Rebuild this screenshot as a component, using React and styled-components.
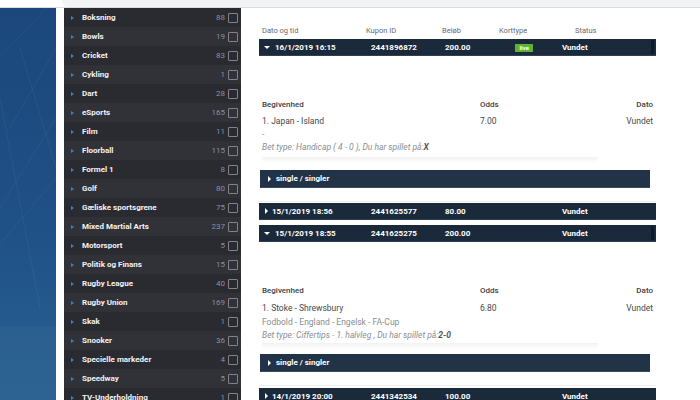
import styled, { createGlobalStyle } from 'styled-components';

const GlobalStyle = createGlobalStyle`
  html, body {
    margin: 0;
    padding: 0;
    background: #ffffff;
    font-family: Roboto, "Liberation Sans", Arial, sans-serif;
  }
  * { box-sizing: border-box; }
`;

const Page = styled.div`
  width: 700px;
  height: 400px;
  overflow: hidden;
  display: flex;
  flex-direction: column;
`;

const TopBar = styled.div`
  height: 8px;
  flex-shrink: 0;
  display: flex;
  background: #ffffff;
  border-bottom: 1px solid #dcdcdc;
`;

const AddressPill = styled.div`
  margin-left: 62px;
  flex: 1;
  background: #f1f3f4;
  border-bottom-left-radius: 6px;
`;

const Body = styled.div`
  flex: 1;
  display: flex;
  min-height: 0;
`;

const BluePanel = styled.div`
  width: 56px;
  flex-shrink: 0;
  background: linear-gradient(180deg, #1b477c 0%, #1f5086 55%, #245a8d 80%, #275e90 100%);
  overflow: hidden;
  svg { display: block; }
`;

const Sidebar = styled.div`
  width: 177px;
  margin-left: 8px;
  flex-shrink: 0;
  background: #2b2b33;
  overflow: hidden;
`;

const SportRow = styled.div`
  height: 19px;
  display: flex;
  align-items: center;
  padding: 0 3px 0 7px;
  background: ${p => (p.$odd ? '#2a2a31' : '#313138')};
`;

const Caret = styled.span`
  width: 0;
  height: 0;
  border-top: 2.5px solid transparent;
  border-bottom: 2.5px solid transparent;
  border-left: 3px solid #2b8ad6;
  margin-right: 8px;
`;

const SportName = styled.span`
  flex: 1;
  color: #f2f2f4;
  font-size: 8px;
  font-weight: 700;
`;

const SportCount = styled.span`
  color: #8790a3;
  font-size: 8px;
  margin-right: 3px;
`;

const CheckBox = styled.span`
  width: 10px;
  height: 10px;
  border: 1px solid #80838d;
  border-radius: 1px;
`;

const Main = styled.div`
  flex: 1;
  padding: 13px 0 0 18px;
  overflow: hidden;
`;

const Table = styled.div`
  width: 397px;
`;

const HeaderRow = styled.div`
  display: grid;
  grid-template-columns: 104px 76px 57px 76px 1fr;
  padding: 0 0 0 3px;
  height: 18px;
  align-items: center;
  color: #666a70;
  font-size: 7.5px;
`;

const Coupon = styled.div`
  display: grid;
  grid-template-columns: 107px 74px 69px 48px 1fr;
  align-items: center;
  height: 17px;
  margin-top: ${p => p.$gap || 0}px;
  padding-left: 5px;
  background: #1b2a3b;
  color: #ffffff;
  font-size: 8px;
  font-weight: 700;
  position: relative;
  border-bottom: 1px solid #2e4056;
  &::after {
    content: '';
    display: ${p => (p.$open ? 'block' : 'none')};
    position: absolute;
    right: 2px;
    top: 1px;
    bottom: 1px;
    width: 3px;
    background: #0f1a26;
  }
`;

const DateCell = styled.span`
  display: flex;
  align-items: center;
  gap: 5px;
`;

const Arrow = styled.span`
  width: 0;
  height: 0;
  ${p =>
    p.$open
      ? `border-left: 3px solid transparent;
         border-right: 3px solid transparent;
         border-top: 3.5px solid #ffffff;`
      : `border-top: 3px solid transparent;
         border-bottom: 3px solid transparent;
         border-left: 3.5px solid #ffffff;
         margin-left: 1px;
         margin-right: -1px;`}
`;

const LiveBadge = styled.span`
  justify-self: start;
  margin-left: 1px;
  margin-top: 2px;
  background: #5cb531;
  color: #ffffff;
  font-size: 6px;
  font-weight: 700;
  line-height: 8px;
  padding: 0 4.5px;
`;

const Details = styled.div`
  padding: ${p => p.$top}px 3px 0 3px;
  color: #444850;
  font-size: 8.5px;
`;

const DetailGrid = styled.div`
  display: grid;
  grid-template-columns: 218px 1fr auto;
  align-items: center;
`;

const DetailHead = styled.span`
  font-size: 8px;
  font-weight: 500;
  color: #3c4047;
  height: ${p => p.$h}px;
  display: flex;
  align-items: center;
  justify-self: ${p => (p.$right ? 'end' : 'start')};
`;

const DetailCell = styled.span`
  height: 17px;
  display: flex;
  align-items: center;
  justify-self: ${p => (p.$right ? 'end' : 'start')};
`;

const SubLine = styled.div`
  color: #8a8d92;
  height: ${p => p.$h}px;
  display: flex;
  align-items: center;
  font-style: ${p => (p.$italic ? 'italic' : 'normal')};
  b { font-weight: 700; color: #55585d; }
`;

const Fade = styled.div`
  height: 6px;
  width: 336px;
  margin-top: 2px;
  background: linear-gradient(180deg, rgba(0, 0, 0, 0.045), rgba(0, 0, 0, 0));
  border-top: 1px solid #f3f3f3;
`;

const SingleBar = styled.div`
  margin: ${p => p.$gap}px 0 0 1px;
  width: 390px;
  height: 18px;
  background: #213346;
  color: #ffffff;
  font-size: 8px;
  font-weight: 700;
  display: flex;
  align-items: center;
  gap: 6px;
  padding-left: 7px;
  border-bottom: 1px solid #3a4a5c;
`;

const Divider = styled.div`
  height: 1px;
  background: #eeeff1;
  margin-top: 13px;
`;

const sports = [
  ['Boksning', 88], ['Bowls', 19], ['Cricket', 83], ['Cykling', 1], ['Dart', 28],
  ['eSports', 165], ['Film', 11], ['Floorball', 115], ['Formel 1', 8], ['Golf', 80],
  ['Gæliske sportsgrene', 75], ['Mixed Martial Arts', 237], ['Motorsport', 5],
  ['Politik og Finans', 15], ['Rugby League', 40], ['Rugby Union', 169], ['Skak', 1],
  ['Snooker', 36], ['Specielle markeder', 4], ['Speedway', 5], ['TV-Underholdning', 1],
];

const BlueLines = () => (
  <svg width="56" height="392" viewBox="0 0 56 392">
    <g stroke="#ffffff" strokeOpacity="0.05" strokeWidth="1" fill="none">
      <line x1="-10" y1="60" x2="56" y2="-10" />
      <line x1="10" y1="120" x2="56" y2="40" />
      <line x1="0" y1="200" x2="56" y2="110" />
      <line x1="-20" y1="260" x2="56" y2="170" />
      <line x1="20" y1="40" x2="56" y2="160" />
      <line x1="0" y1="90" x2="40" y2="300" />
    </g>
    <rect x="0" y="318" width="56" height="74" fill="#ffffff" fillOpacity="0.03" />
  </svg>
);

const CouponRow = ({ date, id, amount, live, open, gap }) => (
  <Coupon $open={open} $gap={gap}>
    <DateCell>
      <Arrow $open={open} />
      {date}
    </DateCell>
    <span>{id}</span>
    <span>{amount}</span>
    {live ? <LiveBadge>live</LiveBadge> : <span />}
    <span>Vundet</span>
  </Coupon>
);

const EventDetails = ({ top, headH, event, odds, sub, subH, bet, betH, pick, barGap }) => (
  <>
    <Details $top={top}>
      <DetailGrid>
        <DetailHead $h={headH}>Begivenhed</DetailHead>
        <DetailHead $h={headH}>Odds</DetailHead>
        <DetailHead $h={headH} $right>Dato</DetailHead>
        <DetailCell>{event}</DetailCell>
        <DetailCell>{odds}</DetailCell>
        <DetailCell $right>Vundet</DetailCell>
      </DetailGrid>
      <SubLine $h={subH}>{sub}</SubLine>
      <SubLine $italic $h={betH}>
        {bet}<b>{pick}</b>
      </SubLine>
      <Fade />
    </Details>
    <SingleBar $gap={barGap}>
      <Arrow />
      single / singler
    </SingleBar>
    <Divider />
  </>
);

const App = () => (
  <>
    <GlobalStyle />
    <Page>
      <TopBar>
        <AddressPill />
      </TopBar>
      <Body>
        <BluePanel>
          <BlueLines />
        </BluePanel>
        <Sidebar>
          {sports.map(([name, count], i) => (
            <SportRow key={name} $odd={i % 2 === 0}>
              <Caret />
              <SportName>{name}</SportName>
              <SportCount>{count}</SportCount>
              <CheckBox />
            </SportRow>
          ))}
        </Sidebar>
        <Main>
          <Table>
            <HeaderRow>
              <span>Dato og tid</span>
              <span>Kupon ID</span>
              <span>Beløb</span>
              <span>Korttype</span>
              <span>Status</span>
            </HeaderRow>
            <CouponRow date="16/1/2019 16:15" id="2441896872" amount="200.00" live open />
            <EventDetails
              top={40}
              headH={16}
              event="1. Japan - Island"
              odds="7.00"
              sub="-"
              subH={9}
              bet="Bet type: Handicap ( 4 - 0 ), Du har spillet på:"
              betH={17}
              pick="X"
              barGap={7}
            />
            <CouponRow date="15/1/2019 18:56" id="2441625577" amount="80.00" gap={1} />
            <CouponRow date="15/1/2019 18:55" id="2441625275" amount="200.00" open gap={5} />
            <EventDetails
              top={39}
              headH={18}
              event="1. Stoke - Shrewsbury"
              odds="6.80"
              sub="Fodbold - England - Engelsk - FA-Cup"
              subH={12}
              bet="Bet type: Ciffertips - 1. halvleg , Du har spillet på:"
              betH={13}
              pick="2-0"
              barGap={5}
            />
            <CouponRow date="14/1/2019 20:00" id="2441342534" amount="100.00" gap={2} />
          </Table>
        </Main>
      </Body>
    </Page>
  </>
);

export default App;
